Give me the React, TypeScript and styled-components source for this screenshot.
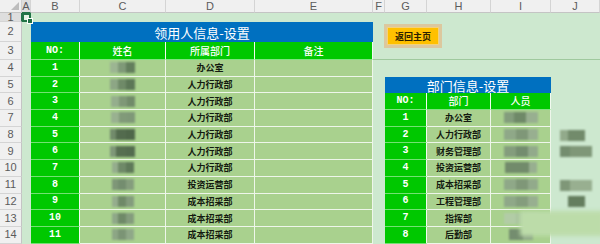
import React from 'react';
import styled, { createGlobalStyle, css } from 'styled-components';

// sheet geometry taken from the screenshot: row header + columns A..J
const COLS = ['A', 'B', 'C', 'D', 'E', 'F', 'G', 'H', 'I', 'J'];
const ROWS = Array.from({ length: 14 }, (_, i) => i + 1);

type Seg = [number, string];

const leftDepts = [
  '办公室', '人力行政部', '人力行政部', '人力行政部', '人力行政部', '人力行政部',
  '人力行政部', '投资运营部', '成本招采部', '成本招采部', '成本招采部'
];

const rightDepts = ['办公室', '人力行政部', '财务管理部', '投资运营部', '成本招采部', '工程管理部', '指挥部', '后勤部'];

// blurred names in column C (rows 4..14)
const leftNames: Seg[][] = [
  [[8, '#9cb592'], [8, '#7f9978'], [9, '#637e5d']],
  [[8, '#8da685'], [8, '#6f8a68'], [9, '#5c7757']],
  [[8, '#95ae8d'], [8, '#7f9877'], [8, '#718b6a']],
  [[8, '#99b190'], [8, '#819a79'], [8, '#7f9878']],
  [[6, '#728b6b'], [10, '#536b4e'], [9, '#4f674a']],
  [[6, '#7f9778'], [10, '#576f51'], [9, '#546c4f']],
  [[6, '#95ad8d'], [8, '#6f8968'], [8, '#5f7959']],
  [[6, '#7f9778'], [8, '#748d6f'], [8, '#859d7d']],
  [[6, '#95ad8d'], [8, '#6f8968'], [8, '#849c7d']],
  [[6, '#8fa888'], [8, '#6f8968'], [8, '#849c7d']],
  [[6, '#8da685'], [8, '#7b9475'], [8, '#8fa888']]
];

// blurred names in column I (rows 7..14)
const rightNames: Seg[][] = [
  [[10, '#839d7c'], [12, '#6f8968'], [12, '#98af90']],
  [[12, '#8fa888'], [12, '#7f9778'], [10, '#98af90']],
  [[12, '#849d7d'], [12, '#748d6f'], [10, '#92aa8b']],
  [[12, '#728b6b'], [12, '#728b6b'], [8, '#98af90']],
  [[12, '#8fa888'], [12, '#7f9778'], [10, '#92aa8b']],
  [[12, '#8fa888'], [12, '#849d7d'], [10, '#98af90']],
  [[12, '#b2cca6'], [12, '#aac59f'], [10, '#b2cca6']],
  [[14, '#748d6f'], [10, '#8fa888']]
];

// stray blurred values right of the table, column J
const looseNames: { row: number; offset: number; segs: Seg[] }[] = [
  { row: 8, offset: 9, segs: [[8, '#92aa8b'], [17, '#728b6b']] },
  { row: 9, offset: 9, segs: [[10, '#748d6f'], [22, '#7f9778']] },
  { row: 11, offset: 9, segs: [[10, '#7f9778'], [22, '#98af90']] },
  { row: 12, offset: 17, segs: [[17, '#647e5e']] }
];

const GlobalStyle = createGlobalStyle`
  html, body {
    margin: 0;
    padding: 0;
  }
  body {
    width: 600px;
    height: 244px;
    overflow: hidden;
    background: #cde8cf;
    font-family: 'Liberation Sans', 'Noto Sans CJK SC', sans-serif;
  }
`;

interface PlaceProps {
  $row: number;
  $col: number;
  $span?: number;
  $rows?: number;
}

const place = css<PlaceProps>`
  grid-row: ${p => p.$row} / span ${p => p.$rows ?? 1};
  grid-column: ${p => p.$col} / span ${p => p.$span ?? 1};
`;

const Sheet = styled.div`
  position: relative;
  display: grid;
  grid-template-columns: 22px 9px 49px 86px 89px 118px 12px 42px 64px 60px 1fr;
  grid-template-rows: 13px 9px 20px 18px repeat(11, 16.7px);
  width: 600px;
  height: 244px;
  overflow: hidden;
  background: #cde8cf;
`;

const Corner = styled.div`
  grid-row: 1;
  grid-column: 1;
  display: flex;
  align-items: flex-end;
  justify-content: flex-end;
  padding: 0 2px 2px 0;
  background: #f0f0f0;
  border-right: 1px solid #d0d0d0;
  border-bottom: 1px solid #c4c4c4;
`;

const HeadBase = css<{ $active?: boolean }>`
  display: flex;
  align-items: center;
  justify-content: center;
  background: ${p => (p.$active ? '#dedede' : '#f0f0f0')};
  color: #5b5b5b;
  font-size: 11px;
  line-height: 1;
`;

const ColHead = styled.div<{ $col: number; $active?: boolean }>`
  ${HeadBase};
  grid-row: 1;
  grid-column: ${p => p.$col};
  border-right: 1px solid #d4d4d4;
  border-bottom: 1px solid ${p => (p.$active ? '#217346' : '#c4c4c4')};
  overflow: hidden;
`;

const RowHead = styled.div<{ $row: number; $active?: boolean }>`
  ${HeadBase};
  grid-row: ${p => p.$row};
  grid-column: 1;
  border-right: 1px solid ${p => (p.$active ? '#217346' : '#c4c4c4')};
  border-bottom: 1px solid #d4d4d4;
`;

const Selected = styled.div`
  position: relative;
  grid-row: 2;
  grid-column: 2;
  border: 2px solid #217346;
  background: #e4f2e4;
`;

const Handle = styled.span`
  position: absolute;
  right: -4px;
  bottom: -4px;
  width: 4px;
  height: 4px;
  background: #217346;
  border: 1px solid #fff;
`;

const Cell = styled.div<PlaceProps>`
  ${place};
  display: flex;
  align-items: center;
  justify-content: center;
  min-width: 0;
  line-height: 1;
  white-space: nowrap;
`;

const Title = styled(Cell)`
  background: #0070c0;
  color: #fff;
  font-family: 'Noto Sans CJK SC', sans-serif;
  font-size: 13px;
  font-weight: 400;
`;

const Head = styled(Cell)`
  background: #00c800;
  color: #fff;
  font-family: 'Noto Sans CJK SC', sans-serif;
  font-size: 10px;
  font-weight: 500;
  border-right: 1px solid #f2fbf0;
  border-bottom: 1px solid rgba(255, 255, 255, 0.5);
`;

const NoHead = styled(Head)`
  font-family: 'Liberation Mono', monospace;
  font-weight: 700;
`;

const Num = styled(Cell)`
  background: #00c800;
  color: #fff;
  font-family: 'Liberation Mono', monospace;
  font-size: 10px;
  font-weight: 700;
  border-right: 1px solid #f2fbf0;
  border-bottom: 1px solid rgba(255, 255, 255, 0.45);
`;

const Data = styled(Cell)`
  background: #a9d18e;
  color: #141a10;
  font-family: 'Noto Sans CJK SC', sans-serif;
  font-size: 9px;
  font-weight: 700;
  border-right: 1px solid #eef6ea;
  border-bottom: 1px solid #eef6ea;
`;

const Loose = styled(Cell)<{ $offset: number }>`
  justify-content: flex-start;
  padding-left: ${p => p.$offset}px;
`;

const Smudge = styled.span`
  display: inline-flex;
  height: 11px;
  filter: blur(0.9px);
`;

const Block = styled.span<{ $w: number; $c: string }>`
  width: ${p => p.$w}px;
  height: 100%;
  background: ${p => p.$c};
`;

const Rule = styled.div`
  grid-row: 4;
  grid-column: 7 / span 5;
  border-bottom: 1px solid #9fc99e;
`;

const HomeButton = styled.button`
  grid-row: 3 / span 2;
  grid-column: 8 / span 2;
  justify-self: start;
  align-self: start;
  margin: 2px 0 0 -1px;
  width: 58px;
  height: 24px;
  padding: 0;
  border: 3px solid #dcc89e;
  background: #ffc000;
  color: #2b2000;
  font-family: 'Noto Sans CJK SC', sans-serif;
  font-size: 9px;
  font-weight: 700;
  line-height: 1;
  box-shadow: inset 0 0 0 1px #f3d27a;
  cursor: pointer;
`;

const Watermark = styled.div`
  position: absolute;
  left: 520px;
  top: 211px;
  width: 84px;
  height: 25px;
  background: #bcdca9;
  filter: blur(2px);
`;

const Names: React.FC<{ segs: Seg[] }> = ({ segs }) => (
  <Smudge>
    {segs.map(([w, c], i) => (
      <Block key={i} $w={w} $c={c} />
    ))}
  </Smudge>
);

// sheet row r lives on grid row r + 1, column index c (A = 0) on grid column c + 2
const gr = (r: number) => r + 1;
const gc = (c: number) => c + 2;

const App: React.FC = () => (
  <>
    <GlobalStyle />
    <Sheet>
      <Corner>
        <svg width='8' height='8' viewBox='0 0 8 8'>
          <polygon points='8,0 8,8 0,8' fill='#bdbdbd' />
        </svg>
      </Corner>
      {COLS.map((c, i) => (
        <ColHead key={c} $col={gc(i)} $active={i === 0}>{c}</ColHead>
      ))}
      {ROWS.map(r => (
        <RowHead key={r} $row={gr(r)} $active={r === 1}>{r}</RowHead>
      ))}

      <Selected>
        <Handle />
      </Selected>

      {/* left table */}
      <Title $row={gr(2)} $col={gc(1)} $span={4}>领用人信息-设置</Title>
      <NoHead $row={gr(3)} $col={gc(1)}>NO:</NoHead>
      <Head $row={gr(3)} $col={gc(2)}>姓名</Head>
      <Head $row={gr(3)} $col={gc(3)}>所属部门</Head>
      <Head $row={gr(3)} $col={gc(4)}>备注</Head>
      {leftDepts.map((d, i) => (
        <React.Fragment key={i}>
          <Num $row={gr(4 + i)} $col={gc(1)}>{i + 1}</Num>
          <Data $row={gr(4 + i)} $col={gc(2)}>
            <Names segs={leftNames[i]} />
          </Data>
          <Data $row={gr(4 + i)} $col={gc(3)}>{d}</Data>
          <Data $row={gr(4 + i)} $col={gc(4)} />
        </React.Fragment>
      ))}

      <Rule />
      <HomeButton>返回主页</HomeButton>

      {/* right table */}
      <Title $row={gr(5)} $col={gc(6)} $span={3}>部门信息-设置</Title>
      <NoHead $row={gr(6)} $col={gc(6)}>NO:</NoHead>
      <Head $row={gr(6)} $col={gc(7)}>部门</Head>
      <Head $row={gr(6)} $col={gc(8)}>人员</Head>
      {rightDepts.map((d, i) => (
        <React.Fragment key={i}>
          <Num $row={gr(7 + i)} $col={gc(6)}>{i + 1}</Num>
          <Data $row={gr(7 + i)} $col={gc(7)}>{d}</Data>
          <Data $row={gr(7 + i)} $col={gc(8)}>
            <Names segs={rightNames[i]} />
          </Data>
        </React.Fragment>
      ))}
      {looseNames.map(n => (
        <Loose key={n.row} $row={gr(n.row)} $col={gc(9)} $offset={n.offset}>
          <Names segs={n.segs} />
        </Loose>
      ))}

      <Watermark />
    </Sheet>
  </>
);

export default App;
